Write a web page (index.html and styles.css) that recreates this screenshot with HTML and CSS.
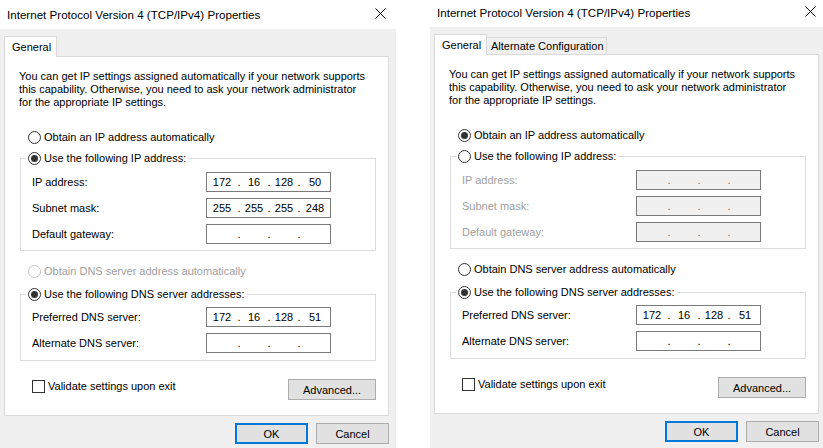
FILE: index.html
```html
<!DOCTYPE html>
<html lang="en">
<head>
<meta charset="utf-8">
<title>Internet Protocol Version 4 (TCP/IPv4) Properties</title>
<link rel="stylesheet" href="styles.css">
</head>
<body>
<div class="screen">
  <section class="dialog">
    <header class="titlebar">
      <span class="title">Internet Protocol Version 4 (TCP/IPv4) Properties</span>
      <svg class="close" width="11" height="11" viewBox="0 0 11 11"><path d="M0.5 0.5 L10.5 10.5 M10.5 0.5 L0.5 10.5" stroke="#000" stroke-width="1" fill="none"/></svg>
    </header>
    <div class="dlgbody">
      <div class="tabs">
        <div class="tab active">General</div>
      </div>
      <div class="panel">
        <p class="desc">You can get IP settings assigned automatically if your network supports<br>this capability. Otherwise, you need to ask your network administrator<br>for the appropriate IP settings.</p>
        <div class="radio-row opt-first"><span class="radio"></span><span>Obtain an IP address automatically</span></div>
        <fieldset class="group group-ip">
          <legend><span class="legend-in"><span class="radio on"></span><span>Use the following IP address:</span></span></legend>
          <div class="row"><span class="label">IP address:</span><div class="ip"><span>172</span><span>.</span><span>16</span><span>.</span><span>128</span><span>.</span><span>50</span></div></div>
          <div class="row"><span class="label">Subnet mask:</span><div class="ip"><span>255</span><span>.</span><span>255</span><span>.</span><span>255</span><span>.</span><span>248</span></div></div>
          <div class="row"><span class="label">Default gateway:</span><div class="ip"><span></span><span>.</span><span></span><span>.</span><span></span><span>.</span><span></span></div></div>
        </fieldset>
        <div class="radio-row opt-dns dis"><span class="radio dis"></span><span>Obtain DNS server address automatically</span></div>
        <fieldset class="group group-dns">
          <legend><span class="legend-in"><span class="radio on"></span><span>Use the following DNS server addresses:</span></span></legend>
          <div class="row"><span class="label">Preferred DNS server:</span><div class="ip"><span>172</span><span>.</span><span>16</span><span>.</span><span>128</span><span>.</span><span>51</span></div></div>
          <div class="row"><span class="label">Alternate DNS server:</span><div class="ip"><span></span><span>.</span><span></span><span>.</span><span></span><span>.</span><span></span></div></div>
        </fieldset>
        <div class="footer">
          <div class="check-row"><span class="checkbox"></span><span>Validate settings upon exit</span></div>
          <button class="btn advanced" type="button">Advanced...</button>
        </div>
      </div>
      <div class="actions">
        <button class="btn ok" type="button">OK</button>
        <button class="btn cancel" type="button">Cancel</button>
      </div>
    </div>
  </section>

  <section class="dialog dialog-b">
    <header class="titlebar">
      <span class="title">Internet Protocol Version 4 (TCP/IPv4) Properties</span>
      <svg class="close" width="11" height="11" viewBox="0 0 11 11"><path d="M0.5 0.5 L10.5 10.5 M10.5 0.5 L0.5 10.5" stroke="#000" stroke-width="1" fill="none"/></svg>
    </header>
    <div class="dlgbody">
      <div class="tabs">
        <div class="tab active">General</div>
        <div class="tab alt">Alternate Configuration</div>
      </div>
      <div class="panel">
        <p class="desc">You can get IP settings assigned automatically if your network supports<br>this capability. Otherwise, you need to ask your network administrator<br>for the appropriate IP settings.</p>
        <div class="radio-row opt-first"><span class="radio on"></span><span>Obtain an IP address automatically</span></div>
        <fieldset class="group group-ip">
          <legend><span class="legend-in"><span class="radio"></span><span>Use the following IP address:</span></span></legend>
          <div class="row dis"><span class="label">IP address:</span><div class="ip disabled"><span></span><span>.</span><span></span><span>.</span><span></span><span>.</span><span></span></div></div>
          <div class="row dis"><span class="label">Subnet mask:</span><div class="ip disabled"><span></span><span>.</span><span></span><span>.</span><span></span><span>.</span><span></span></div></div>
          <div class="row dis"><span class="label">Default gateway:</span><div class="ip disabled"><span></span><span>.</span><span></span><span>.</span><span></span><span>.</span><span></span></div></div>
        </fieldset>
        <div class="radio-row opt-dns"><span class="radio"></span><span>Obtain DNS server address automatically</span></div>
        <fieldset class="group group-dns">
          <legend><span class="legend-in"><span class="radio on"></span><span>Use the following DNS server addresses:</span></span></legend>
          <div class="row"><span class="label">Preferred DNS server:</span><div class="ip"><span>172</span><span>.</span><span>16</span><span>.</span><span>128</span><span>.</span><span>51</span></div></div>
          <div class="row"><span class="label">Alternate DNS server:</span><div class="ip"><span></span><span>.</span><span></span><span>.</span><span></span><span>.</span><span></span></div></div>
        </fieldset>
        <div class="footer">
          <div class="check-row"><span class="checkbox"></span><span>Validate settings upon exit</span></div>
          <button class="btn advanced" type="button">Advanced...</button>
        </div>
      </div>
      <div class="actions">
        <button class="btn ok" type="button">OK</button>
        <button class="btn cancel" type="button">Cancel</button>
      </div>
    </div>
  </section>
</div>
</body>
</html>
```

FILE: styles.css
```css
html, body {
  margin: 0;
  padding: 0;
  background: #ffffff;
}

body {
  width: 823px;
  height: 448px;
  overflow: hidden;
  font-family: "Liberation Sans", Arial, sans-serif;
  font-size: 11px;
  color: #000000;
}

.screen {
  display: flex;
  gap: 34px;
  width: 823px;
  height: 448px;
  overflow: hidden;
}

.dialog {
  flex: 0 0 396px;
  width: 396px;
  display: flex;
  flex-direction: column;
}

.dialog-b {
  margin-top: -2px;
}

.titlebar {
  height: 29px;
  flex: none;
  background: #ffffff;
  display: flex;
  align-items: center;
  justify-content: space-between;
  padding: 0 10px 0 7px;
  box-sizing: border-box;
}

.title {
  font-size: 11.6px;
  line-height: 14px;
}

.close {
  display: block;
  margin-bottom: 2px;
}

.dlgbody {
  flex: 1;
  background: #f0f0f0;
  padding: 7px 7px 0 4px;
}

.tabs {
  display: flex;
  align-items: flex-end;
  height: 20px;
}

.tab {
  position: relative;
  z-index: 1;
  height: 17px;
  box-sizing: border-box;
  border: 1px solid #d9d9d9;
  border-bottom: none;
  background: #f0f0f0;
  display: flex;
  align-items: center;
  padding-left: 4px;
  white-space: nowrap;
}

.tab.active {
  height: 21px;
  width: 53px;
  margin-bottom: -1px;
  padding-left: 7px;
  padding-bottom: 1px;
  background: #ffffff;
}

.tab.alt {
  width: 121px;
  margin-left: -1px;
  z-index: 0;
}

.panel {
  width: 385px;
  box-sizing: border-box;
  background: #ffffff;
  border: 1px solid #d9d9d9;
  padding: 13px 12px 15px 15px;
}

.desc {
  margin: 0 0 0 -1px;
  line-height: 13px;
  white-space: nowrap;
}

.radio-row {
  display: flex;
  align-items: center;
  gap: 3px;
  height: 16px;
  padding-left: 8px;
}

.radio-row.dis {
  color: #a0a0a0;
}

.opt-first {
  margin-top: 20px;
}

.opt-dns {
  margin-top: 12px;
}

.radio {
  flex: none;
  width: 13px;
  height: 13px;
  box-sizing: border-box;
  border: 1px solid #333333;
  border-radius: 50%;
  background: #ffffff;
  display: flex;
  align-items: center;
  justify-content: center;
}

.radio.on::after {
  content: "";
  width: 7px;
  height: 7px;
  border-radius: 50%;
  background: #333333;
}

.radio.dis {
  border-color: #c4c4c4;
}

.group {
  margin: 0;
  border: 1px solid #dcdcdc;
  min-inline-size: 0;
}

.group-ip {
  margin-top: 5px;
  padding: 6px 0 6px 0;
}

.group-dns {
  margin-top: 7px;
  padding: 5px 0 7px 0;
}

.group legend {
  margin-left: 5px;
  padding: 0 2px;
}

.legend-in {
  display: flex;
  align-items: center;
  gap: 3px;
  height: 16px;
}

.row {
  display: flex;
  align-items: center;
  height: 20px;
  padding-left: 11px;
}

.row + .row {
  margin-top: 6px;
}

.row.dis .label {
  color: #a0a0a0;
}

.label {
  width: 174px;
  flex: none;
}

.ip {
  width: 125px;
  height: 20px;
  box-sizing: border-box;
  border: 1px solid #7a7a7a;
  background: #ffffff;
  display: grid;
  grid-template-columns: 30px 4px 26px 4px 26px 4px 28px;
  align-items: center;
  text-align: center;
  line-height: 18px;
}

.ip.disabled {
  background: #f0f0f0;
  color: #6d6d6d;
}

.footer {
  display: flex;
  justify-content: space-between;
  align-items: flex-start;
  margin-top: 17px;
  padding-left: 12px;
}

.check-row {
  display: flex;
  align-items: center;
  gap: 3px;
  height: 16px;
}

.checkbox {
  flex: none;
  width: 13px;
  height: 13px;
  box-sizing: border-box;
  border: 1px solid #333333;
  background: #ffffff;
}

.btn {
  height: 21px;
  box-sizing: border-box;
  background: #e1e1e1;
  border: 1px solid #adadad;
  font: inherit;
  color: #000000;
  padding: 0;
  margin: 0;
}

.advanced {
  width: 88px;
  margin-top: 1px;
}

.actions {
  display: flex;
  justify-content: flex-end;
  gap: 8px;
  margin-top: 7px;
}

.ok,
.cancel {
  width: 73px;
}

.ok {
  border: 2px solid #0078d7;
}
```
